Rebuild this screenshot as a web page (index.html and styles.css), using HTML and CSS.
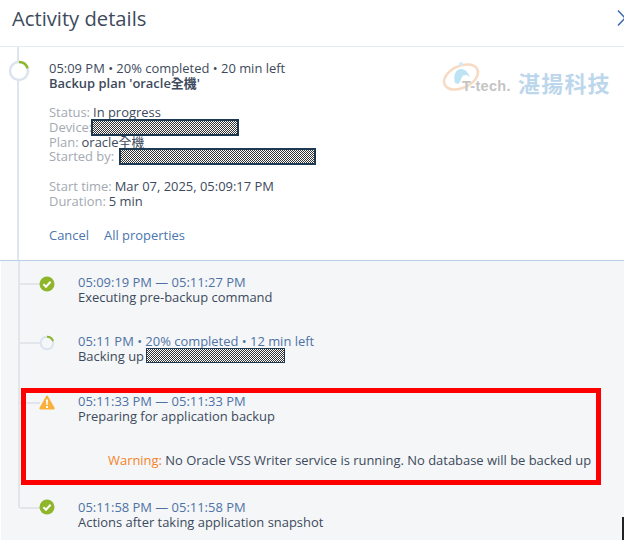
FILE: index.html
```html
<!DOCTYPE html>
<html lang="en">
<head>
<meta charset="utf-8">
<title>Activity details</title>
<link rel="stylesheet" href="styles.css">
</head>
<body>
<main class="panel">
  <header class="head">
    <h1 class="title">Activity details</h1>
    <svg class="close" width="9" height="18" viewBox="0 0 9 18"><path d="M1 1.5 8 9 1 16.5" fill="none" stroke="#3f6db0" stroke-width="1.6"/></svg>
  </header>

  <div class="rail-top"></div>
  <div class="rail-bottom"></div>

  <section class="summary">
    <svg class="spin spin-big" width="22" height="22" viewBox="0 0 22 22">
      <circle cx="11" cy="11" r="9" fill="#fff" stroke="#dbe3ef" stroke-width="2.4"/>
      <path d="M11 2a9 9 0 0 1 8.6 6.3" fill="none" stroke="#8fb52b" stroke-width="2.4"/>
    </svg>
    <div class="watermark">
      <svg class="wm-logo" width="40" height="34" viewBox="0 0 40 34">
        <ellipse cx="19" cy="18" rx="18" ry="11" transform="rotate(-25 19 18)" fill="none" stroke="#f3cfae" stroke-width="2.5"/>
        <path d="M13 24c-2-8 1-14 6-14s7 4 9 8c-4-3-7-2-8 0s-2 6-4 7z" fill="#a9daf2"/>
        <circle cx="19" cy="5" r="2" fill="#c5e4f4"/>
      </svg>
      <span class="wm-latin">T-tech.</span>
      <span class="wm-cjk">湛揚科技</span>
    </div>
    <p class="line">05:09 PM • 20% completed • 20 min left</p>
    <p class="line strong">Backup plan 'oracle全機'</p>
    <dl class="props">
      <div class="row"><dt>Status:</dt> <dd>In progress</dd></div>
      <div class="row"><dt>Device:</dt><span class="redact redact-device"></span></div>
      <div class="row"><dt>Plan:</dt> <dd>oracle全機</dd></div>
      <div class="row"><dt>Started by:</dt><span class="redact redact-user"></span></div>
    </dl>
    <dl class="props">
      <div class="row"><dt>Start time:</dt> <dd>Mar 07, 2025, 05:09:17 PM</dd></div>
      <div class="row"><dt>Duration:</dt> <dd>5 min</dd></div>
    </dl>
    <nav class="actions"><a>Cancel</a><a>All properties</a></nav>
  </section>

  <section class="steps">
    <article class="step step-one">
      <span class="tick"></span>
      <svg class="icon" width="16" height="16" viewBox="0 0 16 16"><circle cx="8" cy="8" r="7.5" fill="#8fb52b"/><path d="M4.4 8.2 7 10.7l4.6-5" fill="none" stroke="#fff" stroke-width="2"/></svg>
      <p class="time">05:09:19 PM — 05:11:27 PM</p>
      <p class="desc">Executing pre-backup command</p>
    </article>
    <article class="step step-two">
      <span class="tick"></span>
      <svg class="icon" width="16" height="16" viewBox="0 0 16 16"><circle cx="8" cy="8" r="6.3" fill="none" stroke="#dbe3ef" stroke-width="2"/><path d="M8 1.7a6.3 6.3 0 0 1 6 4.4" fill="none" stroke="#8fb52b" stroke-width="2"/></svg>
      <p class="time">05:11 PM • 20% completed • 12 min left</p>
      <p class="desc">Backing up<span class="redact redact-item"></span></p>
    </article>
    <article class="step step-three">
      <span class="tick"></span>
      <svg class="icon" width="16" height="15" viewBox="0 0 16 15"><path d="M8 .5c.5 0 .8.3 1 .7l6.5 11.6c.4.8 0 1.7-1 1.7H1.5c-1 0-1.4-.9-1-1.7L7 1.2c.2-.4.5-.7 1-.7z" fill="#fbb03b"/><path d="M7 4.500h2L8.700 10H7.300zM7 11h2v2H7z" fill="#fff"/></svg>
      <p class="time">05:11:33 PM — 05:11:33 PM</p>
      <p class="desc">Preparing for application backup</p>
      <p class="warning"><span class="warn-label">Warning:</span> No Oracle VSS Writer service is running. No database will be backed up</p>
    </article>
    <article class="step step-four">
      <span class="tick"></span>
      <svg class="icon" width="16" height="16" viewBox="0 0 16 16"><circle cx="8" cy="8" r="7.5" fill="#8fb52b"/><path d="M4.4 8.2 7 10.7l4.6-5" fill="none" stroke="#fff" stroke-width="2"/></svg>
      <p class="time">05:11:58 PM — 05:11:58 PM</p>
      <p class="desc">Actions after taking application snapshot</p>
    </article>
  </section>

  <div class="highlight"></div>
  <div class="edge-mark"></div>
</main>
</body>
</html>
```

FILE: styles.css
```css
* { box-sizing: border-box; }
html, body { margin: 0; height: 100%; background: #fff; }
body { overflow: hidden; font-family: "Open Sans", "Noto Sans CJK TC", sans-serif; font-size: 12.95px; line-height: 14.7px; color: #3d4a5c; }
p, dl, dd, h1 { margin: 0; }

.panel { position: relative; width: 624px; height: 540px; overflow: hidden; }

.head { height: 47px; border-bottom: 1px solid #e6ebf3; padding: 5px 0 0 12px; display: flex; justify-content: space-between; }
.title { font-size: 20.2px; line-height: 27px; font-weight: 400; color: #3d4a5c; }
.close { margin-top: 4px; margin-right: -2px; }

.rail-top { position: absolute; left: 17px; top: 47px; width: 2px; height: 214px; background: #dfe5ee; }
.rail-bottom { position: absolute; left: 18px; top: 261px; width: 2px; height: 247px; background: #e2e6ea; }

.summary { position: relative; height: 214px; padding: 14px 0 0 49px; border-bottom: 1px solid #bccfe8; }
.spin-big { position: absolute; left: 8px; top: 13px; }
.line { white-space: nowrap; }
.strong { font-weight: 600; }
.props { margin-top: 15px; }
.row { display: flex; gap: 3px; height: 14.7px; position: relative; white-space: nowrap; }
dt { color: #a3a9b2; }
dd { color: #3d4a5c; }
.actions { margin-top: 19px; display: flex; gap: 15px; color: #4a75ad; }

.redact { display: inline-block; border: 2px solid #1e3a52; background: repeating-conic-gradient(#333 0 25%, #fff 0 50%) 0 0 / 2px 2px; }
.redact-device { position: absolute; left: 42px; top: -1px; width: 148px; height: 17px; }
.redact-user { position: absolute; left: 70px; top: -1px; width: 197px; height: 17px; }
.redact-item { position: absolute; left: 68px; top: -1px; width: 139px; height: 15px; border-width: 1.5px; }

.steps { height: 279px; background: #f4f6f8; margin-left: 1px; }
.step { position: relative; padding-left: 77px; }
.step-one { padding-top: 14px; }
.step-two, .step-three { padding-top: 30px; }
.step-four { padding-top: 32px; }
.time { color: #4f72a5; white-space: nowrap; }
.desc { position: relative; color: #3d4a5c; white-space: nowrap; }
.warning { margin: 30px 0 0 30px; color: #3d4a5c; white-space: nowrap; }
.warn-label { color: #f5822a; }

.icon { position: absolute; left: 38px; top: 31px; }
.step-one .icon { top: 15px; }
.tick { position: absolute; left: 19px; top: 38px; width: 20px; height: 2px; background: #e2e6ea; }
.step-one .tick { top: 22px; }
.step-four .tick { top: 39px; }
.step-four .icon { top: 31px; }

.highlight { position: absolute; left: 21px; top: 388px; width: 580px; height: 97px; border: 5px solid #ff0000; }
.edge-mark { position: absolute; left: 622px; top: 517px; width: 2px; height: 23px; background: #222; }

.watermark { position: absolute; left: 442px; top: 12px; height: 36px; pointer-events: none; }
.wm-logo { position: absolute; left: 0; top: 0; opacity: .75; }
.wm-latin { position: absolute; left: 20px; top: 20px; font: 700 14.5px/15px "Liberation Sans", sans-serif; color: #c4c4c4; letter-spacing: .3px; white-space: nowrap; }
.wm-cjk { position: absolute; left: 76px; top: 10px; font: 700 22px/26px "Noto Sans CJK TC", sans-serif; color: #bcd6ec; white-space: nowrap; letter-spacing: 1.2px; }
```
